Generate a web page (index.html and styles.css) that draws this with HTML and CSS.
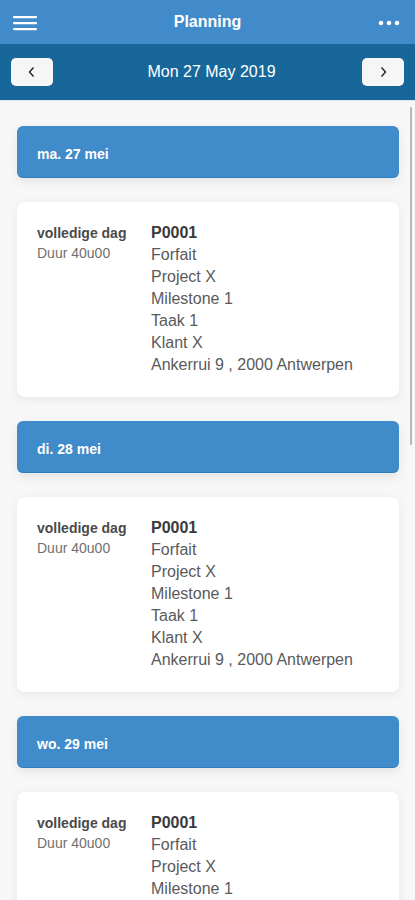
FILE: index.html
```html
<!DOCTYPE html>
<html>
<head>
    <meta charset="UTF-8">
    <meta name="viewport" content="width=device-width, initial-scale=1.0">
    <title>Planning</title>
    <link rel="stylesheet" href="styles.css">
</head>
<body>
    <div class="app">
        <header class="topbar">
            <button class="icon-btn menu-btn" aria-label="Menu">
                <svg width="24" height="16" viewBox="0 0 24 16">
                    <rect x="0" y="1" width="24" height="2.2" rx="1" fill="#fff"/>
                    <rect x="0" y="7" width="24" height="2.2" rx="1" fill="#fff"/>
                    <rect x="0" y="13" width="24" height="2.2" rx="1" fill="#fff"/>
                </svg>
            </button>
            <h1 class="title">Planning</h1>
            <button class="icon-btn more-btn" aria-label="Meer">
                <svg width="22" height="6" viewBox="0 0 22 6">
                    <circle cx="3" cy="3" r="2.3" fill="#fff"/>
                    <circle cx="11" cy="3" r="2.3" fill="#fff"/>
                    <circle cx="19" cy="3" r="2.3" fill="#fff"/>
                </svg>
            </button>
        </header>

        <div class="datebar">
            <button class="nav-btn" aria-label="Vorige">
                <svg width="10" height="12" viewBox="0 0 10 12">
                    <path d="M6.5 1.5 L2.5 6 L6.5 10.5" fill="none" stroke="#222" stroke-width="1.4"/>
                </svg>
            </button>
            <div class="date">Mon 27 May 2019</div>
            <button class="nav-btn" aria-label="Volgende">
                <svg width="10" height="12" viewBox="0 0 10 12">
                    <path d="M3.5 1.5 L7.5 6 L3.5 10.5" fill="none" stroke="#222" stroke-width="1.4"/>
                </svg>
            </button>
        </div>

        <main class="content">
            <div class="scroll-thumb"></div>

            <div class="day-header">ma. 27 mei</div>
            <div class="card">
                <div class="when">
                    <div class="when-title">volledige dag</div>
                    <div class="when-sub">Duur 40u00</div>
                </div>
                <div class="details">
                    <div class="code">P0001</div>
                    <div>Forfait</div>
                    <div>Project X</div>
                    <div>Milestone 1</div>
                    <div>Taak 1</div>
                    <div>Klant X</div>
                    <div>Ankerrui 9 , 2000 Antwerpen</div>
                </div>
            </div>

            <div class="day-header">di. 28 mei</div>
            <div class="card">
                <div class="when">
                    <div class="when-title">volledige dag</div>
                    <div class="when-sub">Duur 40u00</div>
                </div>
                <div class="details">
                    <div class="code">P0001</div>
                    <div>Forfait</div>
                    <div>Project X</div>
                    <div>Milestone 1</div>
                    <div>Taak 1</div>
                    <div>Klant X</div>
                    <div>Ankerrui 9 , 2000 Antwerpen</div>
                </div>
            </div>

            <div class="day-header">wo. 29 mei</div>
            <div class="card">
                <div class="when">
                    <div class="when-title">volledige dag</div>
                    <div class="when-sub">Duur 40u00</div>
                </div>
                <div class="details">
                    <div class="code">P0001</div>
                    <div>Forfait</div>
                    <div>Project X</div>
                    <div>Milestone 1</div>
                    <div>Taak 1</div>
                    <div>Klant X</div>
                    <div>Ankerrui 9 , 2000 Antwerpen</div>
                </div>
            </div>
        </main>
    </div>
</body>
</html>
```

FILE: styles.css
```css
html, body {
    margin: 0;
    padding: 0;
    overflow: hidden;
}

body {
    font-family: "Liberation Sans", Arial, sans-serif;
    background-color: #f7f7f7;
}

.app {
    height: 900px;
    display: flex;
    flex-direction: column;
    overflow: hidden;
}

.topbar {
    height: 44px;
    flex: none;
    background-color: #428bca;
    display: flex;
    align-items: center;
    justify-content: space-between;
    padding: 0 13px 0 13px;
}

.icon-btn {
    background: none;
    border: none;
    padding: 0;
    display: flex;
    align-items: center;
}

.menu-btn {
    width: 24px;
    height: 44px;
    padding-top: 2px;
}

.more-btn {
    width: 24px;
    height: 44px;
    padding-top: 2px;
}

.title {
    margin: 0;
    color: #fff;
    font-size: 16px;
    font-weight: bold;
}

.datebar {
    height: 57px;
    flex: none;
    background-color: #18679a;
    display: flex;
    align-items: center;
    justify-content: space-between;
    padding: 0 11px;
    border-bottom: 1px solid #dde6ee;
    box-sizing: border-box;
}

.nav-btn {
    width: 42px;
    height: 28px;
    border: none;
    border-radius: 5px;
    background-color: #f6f6f6;
    display: flex;
    align-items: center;
    justify-content: center;
    padding: 0;
}

.date {
    color: #fff;
    font-size: 16px;
    margin-left: 8px;
}

.content {
    position: relative;
    flex: 1;
    padding: 25px 16px 0 17px;
}

.scroll-thumb {
    position: absolute;
    top: 6px;
    right: 3px;
    width: 2px;
    height: 338px;
    border-radius: 1px;
    background-color: #b8b8b8;
}

.day-header {
    height: 52px;
    line-height: 48px;
    padding: 4px 20px 0 20px;
    border-radius: 6px;
    background-color: #408bca;
    border-bottom: 1px solid #2f7cbf;
    box-sizing: border-box;
    color: #fff;
    font-size: 14px;
    font-weight: bold;
    box-shadow: 0 4px 10px rgba(0, 0, 0, 0.08);
    margin-bottom: 24px;
}

.card {
    display: flex;
    padding: 20px 20px 21px 20px;
    background-color: #fff;
    border-radius: 8px;
    box-shadow: 0 2px 10px rgba(0, 0, 0, 0.07);
    margin-bottom: 24px;
}

.when {
    width: 114px;
    flex: none;
    padding-top: 1px;
    font-size: 14px;
    line-height: 20px;
}

.when-title {
    font-weight: bold;
    color: #4a4a4a;
}

.when-sub {
    color: #707070;
}

.details {
    font-size: 16px;
    line-height: 22px;
    color: #5a5a5a;
}

.details .code {
    font-weight: bold;
    color: #3a3a3a;
}
```
